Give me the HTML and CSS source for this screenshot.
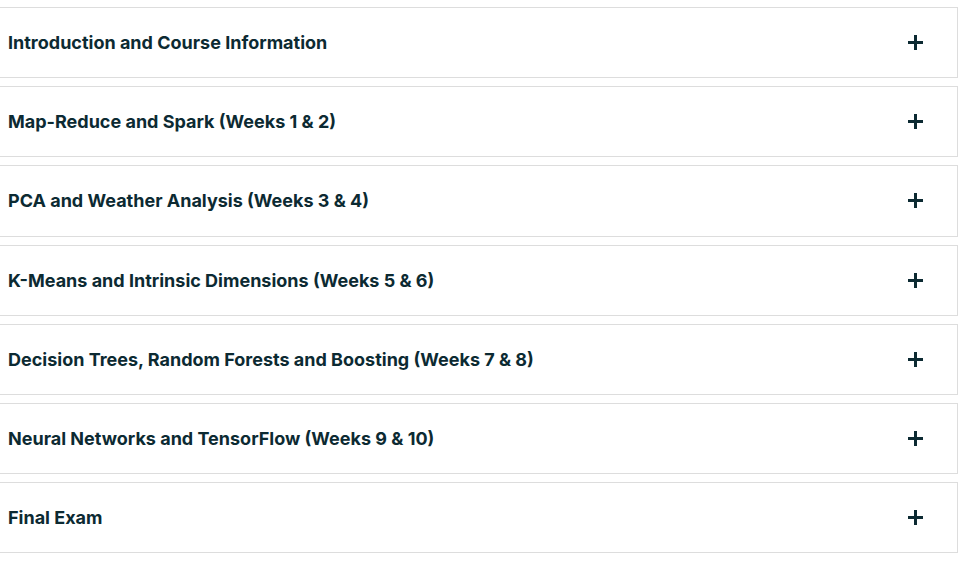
FILE: index.html
```html
<!DOCTYPE html>
<html>
<head>
<meta charset="utf-8">
<link rel="stylesheet" href="styles.css">
</head>
<body>
<div class="accordion">
  <div class="item"><span class="title">Introduction and Course Information</span><span class="plus"></span></div>
  <div class="item"><span class="title">Map-Reduce and Spark (Weeks 1 &amp; 2)</span><span class="plus"></span></div>
  <div class="item"><span class="title">PCA and Weather Analysis (Weeks 3 &amp; 4)</span><span class="plus"></span></div>
  <div class="item"><span class="title">K-Means and Intrinsic Dimensions (Weeks 5 &amp; 6)</span><span class="plus"></span></div>
  <div class="item"><span class="title">Decision Trees, Random Forests and Boosting (Weeks 7 &amp; 8)</span><span class="plus"></span></div>
  <div class="item"><span class="title">Neural Networks and TensorFlow (Weeks 9 &amp; 10)</span><span class="plus"></span></div>
  <div class="item"><span class="title">Final Exam</span><span class="plus"></span></div>
</div>
</body>
</html>
```
FILE: styles.css
```css
html, body {
  margin: 0;
  padding: 0;
  background: #ffffff;
}
body {
  font-family: Inter, "Noto Sans", sans-serif;
  color: #0c2a32;
}
.accordion {
  display: flex;
  flex-direction: column;
  gap: 8px;
  padding-top: 7px;
  margin-left: -1px;
  width: 959px;
}
.item {
  box-sizing: border-box;
  height: 71.2px;
  border: 1px solid #dddddd;
  display: flex;
  align-items: center;
  justify-content: space-between;
  padding: 0 34px 0 8px;
}
.title {
  font-size: 18px;
  font-weight: 700;
}
.plus {
  position: relative;
  width: 15px;
  height: 15px;
}
.plus::before, .plus::after {
  content: "";
  position: absolute;
  background: #0c2a32;
}
.plus::before {
  left: 0;
  right: 0;
  top: 6px;
  height: 3px;
}
.plus::after {
  top: 0;
  bottom: 0;
  left: 6px;
  width: 3px;
}
```
